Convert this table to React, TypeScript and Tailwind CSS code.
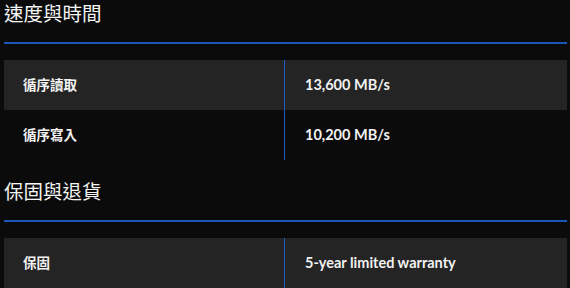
const font = "font-['Noto_Sans','Noto_Sans_CJK_TC',sans-serif]";

type Row = { label: string; value: string };

const sections: { title: string; rows: Row[] }[] = [
  {
    title: "速度與時間",
    rows: [
      { label: "循序讀取", value: "13,600 MB/s" },
      { label: "循序寫入", value: "10,200 MB/s" },
    ],
  },
  {
    title: "保固與退貨",
    rows: [{ label: "保固", value: "5-year limited warranty" }],
  },
];

function SpecTable({ rows }: { rows: Row[] }) {
  return (
    <div className="mt-4 flex flex-col">
      {rows.map((row, i) => (
        <div
          key={row.label}
          className={`flex h-[50px] items-center ${i % 2 === 0 ? "bg-[#242424]" : "bg-[#0b0b0b]"}`}
        >
          <div className="flex h-full w-[281px] shrink-0 items-center border-r border-[#1d5ec4] pl-[19px] text-[13.5px] font-bold text-[#f2f2f2]">
            {row.label}
          </div>
          <div className="pl-5 font-['Lato','Noto_Sans',sans-serif] text-[14.5px] font-bold text-[#f2f2f2]">
            {row.value}
          </div>
        </div>
      ))}
    </div>
  );
}

export default function App() {
  return (
    <div className={`${font} h-[288px] w-[570px] overflow-hidden bg-[#0b0b0b] pl-1 pr-[3px]`}>
      {sections.map((s, i) => (
        <section key={s.title} className={i > 0 ? "mt-[18px]" : ""}>
          <h2 className="pb-[14px] text-[19.5px] leading-[28px] font-normal text-[#f5f5f5]">{s.title}</h2>
          <div className="h-[2px] bg-[#1a56b8]" />
          <SpecTable rows={s.rows} />
        </section>
      ))}
    </div>
  );
}
